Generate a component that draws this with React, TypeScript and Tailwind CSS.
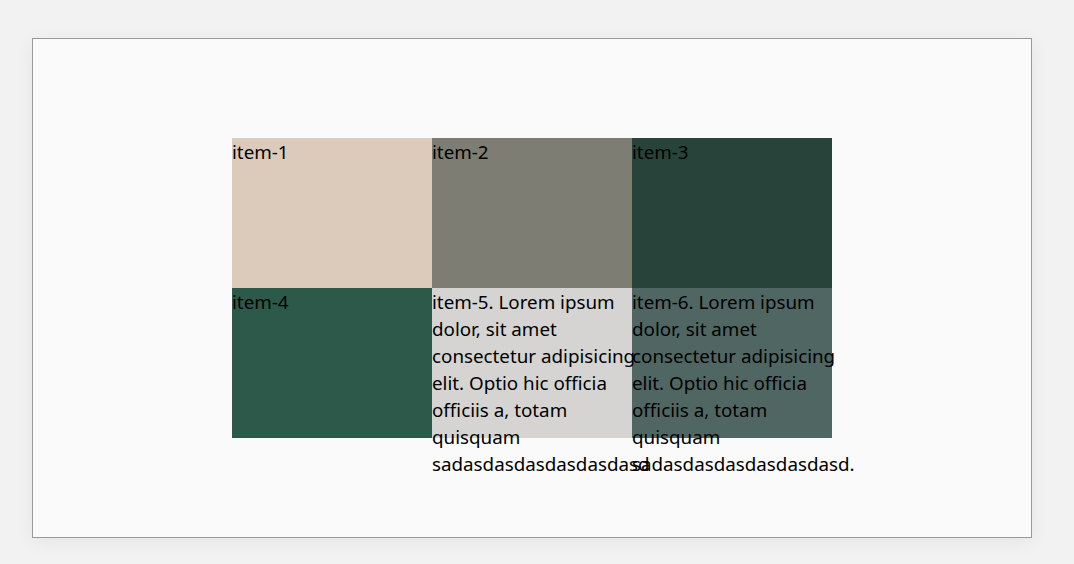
const lines = [
  ". Lorem ipsum",
  "dolor, sit amet",
  "consectetur adipisicing",
  "elit. Optio hic officia",
  "officiis a, totam",
  "quisquam",
];

function LongItem({ n, last, bg }: { n: number; last: string; bg: string }) {
  return (
    <div className={bg}>
      {lines.map((l, i) => (
        <div key={i} className="whitespace-nowrap">
          {i === 0 ? `item-${n}${l}` : l}
        </div>
      ))}
      <div className="whitespace-nowrap">{last}</div>
    </div>
  );
}

export default function App() {
  return (
    <div
      className="min-h-[564px] w-full bg-[#f2f2f2] pt-[38px] pl-[32px]"
      style={{ fontFamily: '"Noto Sans", sans-serif' }}
    >
      <div className="w-[1000px] h-[500px] border border-[#9a9a9a] bg-[#fafafa] shadow-[0_4px_18px_rgba(0,0,0,0.06)] flex items-center justify-center">
        <div className="grid grid-cols-[200px_200px_200px] grid-rows-[150px_150px] text-[18.8px] leading-[27px] text-black">
          <div className="bg-[#dccbbb] pt-[1px]">item-1</div>
          <div className="bg-[#7e7d74] pt-[1px]">item-2</div>
          <div className="bg-[#28443a] pt-[1px]">item-3</div>
          <div className="bg-[#2d594a] pt-[1px]">item-4</div>
          <div className="relative z-10">
            <LongItem n={5} last="sadasdasdasdasdasdasd" bg="bg-[#d5d4d2] pt-[1px] h-[150px]" />
          </div>
          <LongItem n={6} last="sadasdasdasdasdasdasd." bg="bg-[#506663] pt-[1px]" />
        </div>
      </div>
    </div>
  );
}
